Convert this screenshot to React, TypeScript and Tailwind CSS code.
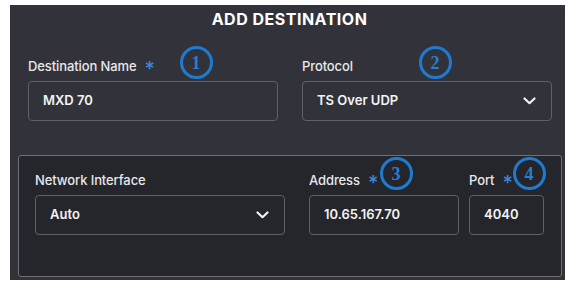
import React from "react";

const font = { fontFamily: "Inter, 'Noto Sans', sans-serif" };

function Chevron() {
  return (
    <svg width="13" height="8" viewBox="0 0 13 8" className="shrink-0">
      <polyline points="1.5,1.5 6.5,6.2 11.5,1.5" fill="none" stroke="#f2f2f2" strokeWidth="2.2" strokeLinecap="round" strokeLinejoin="round" />
    </svg>
  );
}

function Badge({ n, x, y }: { n: string; x: number; y: number }) {
  return (
    <div
      className="absolute flex items-center justify-center rounded-full border-[3px] border-[#1f7bd2] text-[#2a7dd0] text-[18px] font-bold leading-none w-[33px] h-[33px]"
      style={{ left: x - 16.5, top: y - 16.5, fontFamily: "'Liberation Serif', serif" }}
    >
      <span className="mt-[1px]">{n}</span>
    </div>
  );
}

function Label({ text, req }: { text: string; req?: boolean }) {
  return (
    <div className="h-[16px] flex items-center text-[13px] text-[#e8e8ea] font-medium tracking-[-0.1px]">
      <span>{text}</span>
      {req && <span className="ml-[8px] text-[#3a86db] text-[20px] leading-none mt-[3px]">*</span>}
    </div>
  );
}

function Field({ value, select, w }: { value: string; select?: boolean; w: string }) {
  return (
    <div className={`${w} h-[40px] rounded-[4px] border border-[#5f6069] flex items-center justify-between pl-[14px] pr-[15px] text-[13px] font-semibold text-[#f3f3f5]`}>
      <span>{value}</span>
      {select && <Chevron />}
    </div>
  );
}

export default function App() {
  return (
    <div className="w-[585px] h-[300px] bg-white pt-[5px] pl-[10px]" style={font}>
      <div className="relative w-[555px] h-[275px] bg-[#32333a] flex flex-col pl-[18px] pr-[4px]">
        <div className="h-[28px] flex items-center justify-center text-[16px] font-bold text-white tracking-[0.5px] pr-[10px]">
          ADD DESTINATION
        </div>
        <div className="mt-[26px] flex gap-[24px]">
          <div className="flex flex-col gap-[6px]">
            <Label text="Destination Name" req />
            <Field value="MXD 70" w="w-[250px]" />
          </div>
          <div className="flex flex-col gap-[6px]">
            <Label text="Protocol" />
            <Field value="TS Over UDP" select w="w-[250px]" />
          </div>
        </div>
        <div className="mt-[34px] w-[544px] -ml-[10px] h-[122px] rounded-[3px] border border-[#6e6f79] bg-[#25262b] flex gap-[24px] pl-[16px] pt-[17px]">
          <div className="flex flex-col gap-[6px]">
            <Label text="Network Interface" />
            <Field value="Auto" select w="w-[250px]" />
          </div>
          <div className="flex gap-[10px]">
            <div className="flex flex-col gap-[6px]">
              <Label text="Address" req />
              <Field value="10.65.167.70" w="w-[150px]" />
            </div>
            <div className="flex flex-col gap-[6px]">
              <Label text="Port" req />
              <Field value="4040" w="w-[75px]" />
            </div>
          </div>
        </div>
        <Badge n="1" x={186} y={57} />
        <Badge n="2" x={425} y={57} />
        <Badge n="3" x={386} y={168} />
        <Badge n="4" x={519} y={168} />
      </div>
    </div>
  );
}
